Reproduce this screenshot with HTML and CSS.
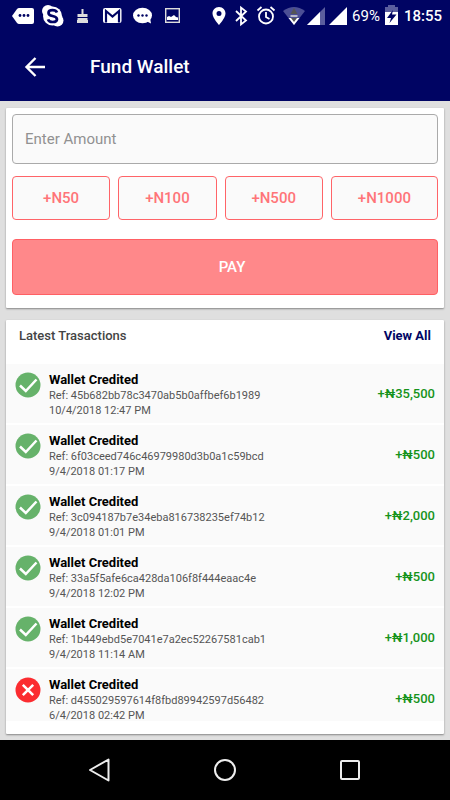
FILE: index.html
```html
<!DOCTYPE html>
<html lang="en">
<head>
<meta charset="utf-8">
<meta name="viewport" content="width=device-width, initial-scale=1">
<title>Fund Wallet</title>
<link rel="stylesheet" href="styles.css">
</head>
<body>
<svg class="defs" aria-hidden="true">
  <symbol id="ok" viewBox="0 0 26 26"><circle cx="13" cy="13" r="12.5" fill="#66b26a"/><path d="M5 13.5l5.8 5.5L21.500 7.500" fill="none" stroke="#fff" stroke-width="2.500"/></symbol>
  <symbol id="fail" viewBox="0 0 26 26"><circle cx="13" cy="13" r="12.5" fill="#fb2c30"/><path d="M7.800 7.800l10.400 10.400M18.200 7.800L7.800 18.200" fill="none" stroke="#fff" stroke-width="2.500"/></symbol>
</svg>
<header class="top">
  <div class="status">
    <div class="status-left">
      <svg viewBox="0 0 30 32"><path d="M4 16l5-7q1-1 2-1h13q2 0 2 2v12q0 2-2 2H11q-1 0-2-1z" fill="#fff"/><g fill="#000463"><circle cx="12" cy="15.500" r="1.400"/><circle cx="16" cy="15.500" r="1.400"/><circle cx="20" cy="15.500" r="1.400"/></g></svg>
      <svg viewBox="0 0 30 32"><circle cx="14.500" cy="16" r="9.500" fill="#fff"/><circle cx="10" cy="11" r="6" fill="#fff"/><circle cx="19.500" cy="20.500" r="6" fill="#fff"/><path d="M19 12.500q-1-2.300-4.500-2.300-4 0-4 2.800 0 2.200 4 3 4.500.8 4.500 3.200 0 2.800-4.200 2.800-4 0-4.800-2.700" fill="none" stroke="#000463" stroke-width="2.700"/></svg>
      <svg viewBox="0 0 30 32"><path d="M13.500 9h2v5h4v3h-10v-3h4zM9.500 18h10v2h-10zM9 20h11v3H9z" fill="#ddd"/></svg>
      <svg viewBox="0 0 30 32"><rect x="5" y="8" width="18.500" height="15" rx="2" fill="#fff"/><path d="M8 22.500V11l6.500 5.500L21 11v11.500" fill="none" stroke="#000463" stroke-width="2.200"/></svg>
      <svg viewBox="0 0 30 32"><ellipse cx="14.500" cy="15.500" rx="9.500" ry="7.800" fill="#fff"/><path d="M18 21l5 2.500-1-6z" fill="#fff"/><g fill="#000463"><circle cx="10.500" cy="15.500" r="1.200"/><circle cx="14.500" cy="15.500" r="1.200"/><circle cx="18.500" cy="15.500" r="1.200"/></g></svg>
      <svg viewBox="0 0 30 32"><rect x="7.700" y="8.700" width="13.600" height="13.600" fill="none" stroke="#ddd" stroke-width="1.400"/><path d="M9 20v-3l2-1 2 1 3-2 2 2 2 .5V20z" fill="#fff"/></svg>
    </div>
    <div class="status-right">
      <svg viewBox="0 0 24 32"><path fill-rule="evenodd" d="M12 7c-4 0-6.500 3-6.500 6.500C5.500 18 12 25 12 25s6.500-7 6.500-11.500C18.500 10 16 7 12 7zm0 4a2.500 2.500 0 1 1 0 5 2.500 2.500 0 0 1 0-5z" fill="#fff"/></svg>
      <svg viewBox="0 0 24 32"><path d="M5 11l10 9.500-5 4V7.500l5 4L5 21" fill="none" stroke="#fff" stroke-width="1.800"/></svg>
      <svg viewBox="0 0 24 32"><g fill="none" stroke="#fff" stroke-width="1.800"><circle cx="11" cy="16.500" r="7"/><path d="M11 12v5l3.500 2M2.500 10.500l4-3.500M19.500 10.500l-4-3.500"/></g></svg>
      <svg viewBox="0 0 24 32"><path d="M4 11q11-8 22 0L15 25z" fill="#4c4f95"/><path d="M9.500 18h11L15 25z" fill="#fff"/><path d="M15 8l3.500 6h-7zM15 22l-3-4h6z" fill="#555"/><path d="M11.500 16h7" stroke="#ddd" stroke-width="1.500"/></svg>
      <svg viewBox="0 0 24 32"><path d="M4 25L22 7v18z" fill="#5b5e9e"/><path d="M4 25L17 12v13z" fill="#fff"/></svg>
      <svg viewBox="0 0 24 32"><path d="M2 25L20 7v18z" fill="#fff"/></svg>
      <span class="battery-text">69%</span>
      <svg viewBox="0 0 24 32"><path d="M5 7h3V5h7v2h3v6H5z" fill="#5b5e9e"/><path d="M5 12h13v13H5z" fill="#fff"/><path d="M13 10l-6 8h4L9.500 23l7-8.500h-4.500z" fill="#000463"/></svg>
      <span class="clock">18:55</span>
    </div>
  </div>
  <div class="appbar">
    <button class="back" aria-label="Back"><svg viewBox="0 0 24 24"><path d="M22 12H4M12.500 3L3.500 12l9 9" fill="none" stroke="#fff" stroke-width="2.400"/></svg></button>
    <h1>Fund Wallet</h1>
  </div>
</header>
<main>
  <section class="card fund">
    <input class="amount" type="text" aria-label="Enter Amount" placeholder="Enter Amount">
    <div class="presets">
      <button>+N50</button><button>+N100</button><button>+N500</button><button>+N1000</button>
    </div>
    <button class="pay">PAY</button>
  </section>
  <section class="card">
    <div class="list-head"><h2>Latest Trasactions</h2><a href="#">View All</a></div>
    <ul class="list">
      <li><svg><use href="#ok"/></svg><div class="info"><h3>Wallet Credited</h3><p>Ref: 45b682bb78c3470ab5b0affbef6b1989</p><p>10/4/2018 12:47 PM</p></div><span class="sum">+₦35,500</span></li>
      <li><svg><use href="#ok"/></svg><div class="info"><h3>Wallet Credited</h3><p>Ref: 6f03ceed746c46979980d3b0a1c59bcd</p><p>9/4/2018 01:17 PM</p></div><span class="sum">+₦500</span></li>
      <li><svg><use href="#ok"/></svg><div class="info"><h3>Wallet Credited</h3><p>Ref: 3c094187b7e34eba816738235ef74b12</p><p>9/4/2018 01:01 PM</p></div><span class="sum">+₦2,000</span></li>
      <li><svg><use href="#ok"/></svg><div class="info"><h3>Wallet Credited</h3><p>Ref: 33a5f5afe6ca428da106f8f444eaac4e</p><p>9/4/2018 12:02 PM</p></div><span class="sum">+₦500</span></li>
      <li><svg><use href="#ok"/></svg><div class="info"><h3>Wallet Credited</h3><p>Ref: 1b449ebd5e7041e7a2ec52267581cab1</p><p>9/4/2018 11:14 AM</p></div><span class="sum">+₦1,000</span></li>
      <li><svg><use href="#fail"/></svg><div class="info"><h3>Wallet Credited</h3><p>Ref: d455029597614f8fbd89942597d56482</p><p>6/4/2018 02:42 PM</p></div><span class="sum">+₦500</span></li>
    </ul>
  </section>
</main>
<nav class="nav">
  <button aria-label="Back"><svg viewBox="0 0 24 24"><path d="M20.500 1.500v21L2 12z" fill="none" stroke="#eee" stroke-width="2" stroke-linejoin="round"/></svg></button>
  <button aria-label="Home"><svg viewBox="0 0 24 24"><circle cx="12" cy="12" r="10" fill="none" stroke="#eee" stroke-width="2"/></svg></button>
  <button aria-label="Recent apps"><svg viewBox="0 0 24 24"><rect x="3" y="3" width="18" height="18" rx="1" fill="none" stroke="#eee" stroke-width="2"/></svg></button>
</nav>
</body>
</html>
```
FILE: styles.css
```css
* { box-sizing: border-box; margin: 0; padding: 0; }
body {
  min-height: 100vh;
  display: flex;
  flex-direction: column;
  background: #dfdfdf;
  font-family: Roboto, "Noto Sans", sans-serif;
}
button, input { font: inherit; }
svg { display: block; overflow: visible; }
.defs { position: absolute; width: 0; height: 0; }

.top { background: #000463; color: #fff; }
.status { display: flex; justify-content: space-between; height: 32px; padding: 0 8px; }
.status-left, .status-right { display: flex; align-items: center; }
.status-left svg { width: 30px; height: 32px; }
.status-right svg { width: 24px; height: 32px; }
.battery-text { font-size: 15px; margin-left: 1px; }
.clock { font-size: 15px; font-weight: 500; }
.appbar { display: flex; align-items: center; gap: 43px; height: 69px; padding: 0 23px; }
.back { background: none; border: 0; }
.back svg { width: 24px; height: 24px; }
h1 { font-size: 19px; font-weight: 500; }

main { flex: 1; display: flex; flex-direction: column; gap: 12px; padding: 7px 6px 6px; }
.card { background: #fff; border-radius: 1px; box-shadow: 0 1px 2px rgba(0, 0, 0, .4); }
.fund { padding: 6px 6px 13px; }
.amount {
  display: block;
  width: 100%;
  height: 50px;
  padding: 0 12px;
  border: 1px solid #aaa;
  border-radius: 4px;
  background: #fafafa;
  font-size: 15px;
}
.amount::placeholder { color: #919191; opacity: 1; }
.presets { display: grid; grid-template-columns: 11fr 11fr 11fr 12fr; gap: 8px; margin: 12px 0 19px; }
.presets button {
  height: 44px;
  border: 1px solid #ff6468;
  border-radius: 4px;
  background: #fafafa;
  color: #ff7478;
  font-size: 15px;
  font-weight: 500;
}
.pay {
  display: block;
  width: 100%;
  height: 56px;
  padding-left: 14px;
  border: 1px solid #ff6064;
  border-radius: 4px;
  background: #ff888a;
  color: #fff;
  font-size: 15px;
  font-weight: 500;
}
.list-head { display: flex; justify-content: space-between; height: 44px; padding: 8px 13px; font-size: 13px; line-height: 16px; }
h2 { color: #444; font-size: 13px; font-weight: 500; }
.list-head a { color: #000463; font-weight: 700; text-decoration: none; }
.list { display: grid; gap: 2px; list-style: none; padding-bottom: 13px; }
.list li { display: flex; align-items: flex-start; height: 59px; padding: 8px 9px; background: #fafafa; }
.list li:last-child { height: 52px; }
.list svg { width: 26px; height: 26px; margin-right: 8px; }
.info { flex: 1; }
h3 { font-size: 13px; font-weight: 700; line-height: 16px; color: #000; }
.info p { font-size: 11px; line-height: 15px; color: #555; }
.sum { color: #16931b; font-size: 13px; font-weight: 500; line-height: 16px; padding-top: 14px; }

.nav { display: flex; justify-content: center; align-items: center; gap: 101px; height: 60px; background: #000; }
.nav button { background: none; border: 0; }
.nav svg { width: 24px; height: 24px; }
```
